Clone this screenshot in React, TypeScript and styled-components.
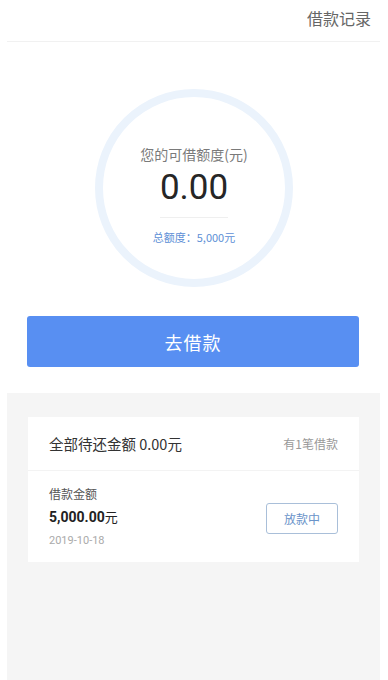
import styled, { createGlobalStyle } from 'styled-components';

const GlobalStyle = createGlobalStyle`
    html, body {
        margin: 0;
        padding: 0;
        background: #ffffff;
        font-family: "Noto Sans CJK SC", "Noto Sans", sans-serif;
    }
`;

const loan = {
    date: '2019-10-18',
    amount: '5,000.00',
    status: '放款中',
};

export default function App() {
    return (
        <>
            <GlobalStyle />
            <Page>
                <TopBar>
                    <TopLink>借款记录</TopLink>
                </TopBar>

                <Hero>
                    <Ring>
                        <RingLabel>您的可借额度(元)</RingLabel>
                        <RingValue>0.00</RingValue>
                        <RingDivider />
                        <RingTotal>总额度：5,000元</RingTotal>
                    </Ring>
                </Hero>

                <ButtonWrap>
                    <PrimaryButton>去借款</PrimaryButton>
                </ButtonWrap>

                <GrayPanel>
                    <Card>
                        <CardHeader>
                            <CardTitle>全部待还金额 0.00元</CardTitle>
                            <CardCount>有1笔借款</CardCount>
                        </CardHeader>
                        <LoanRow>
                            <LoanInfo>
                                <LoanLabel>借款金额</LoanLabel>
                                <LoanAmount>
                                    {loan.amount}
                                    <small>元</small>
                                </LoanAmount>
                                <LoanDate>{loan.date}</LoanDate>
                            </LoanInfo>
                            <StatusButton>{loan.status}</StatusButton>
                        </LoanRow>
                    </Card>
                </GrayPanel>
            </Page>
        </>
    );
}

/* Styles */
const Page = styled.div`
    width: 388px;
    height: 680px;
    display: flex;
    flex-direction: column;
    overflow: hidden;
    background: #fff;
`;
const TopBar = styled.div`
    height: 42px;
    margin: 0 8px 0 7px;
    border-bottom: 1px solid #f1f1f1;
    display: flex;
    justify-content: flex-end;
    align-items: flex-start;
    box-sizing: border-box;
`;
const TopLink = styled.span`
    font-size: 16px;
    line-height: 20px;
    color: #666;
    margin-top: 8px;
    margin-right: 9px;
`;
const Hero = styled.div`
    display: flex;
    justify-content: center;
    padding-top: 47px;
`;
const Ring = styled.div`
    width: 198px;
    height: 198px;
    box-sizing: border-box;
    border: 8px solid #ebf3fc;
    border-radius: 50%;
    display: flex;
    flex-direction: column;
    align-items: center;
    padding-top: 48px;
`;
const RingLabel = styled.div`
    font-size: 14px;
    line-height: 18px;
    color: #7a7a7a;
`;
const RingValue = styled.div`
    font-family: "Roboto", "Noto Sans", sans-serif;
    font-size: 35px;
    line-height: 40px;
    color: #262626;
    margin-top: 5px;
`;
const RingDivider = styled.div`
    width: 68px;
    height: 1px;
    background: #efefef;
    margin-top: 9px;
`;
const RingTotal = styled.div`
    font-size: 11px;
    line-height: 16px;
    color: #5e8fd6;
    margin-top: 11px;
`;
const ButtonWrap = styled.div`
    padding: 29px 29px 0 27px;
`;
const PrimaryButton = styled.button`
    width: 100%;
    height: 51px;
    border: none;
    border-radius: 3px;
    background: #588ff2;
    color: #fff;
    font-family: "Noto Sans CJK SC", sans-serif;
    font-size: 18px;
    letter-spacing: 1px;
`;
const GrayPanel = styled.div`
    flex: 1;
    margin: 26px 8px 0 7px;
    background: #f5f5f5;
    padding: 24px 21px 0 21px;
`;
const Card = styled.div`
    background: #fff;
`;
const CardHeader = styled.div`
    height: 53px;
    padding: 0 21px;
    border-bottom: 1px solid #f3f3f3;
    display: flex;
    align-items: center;
    justify-content: space-between;
`;
const CardTitle = styled.span`
    font-size: 14.5px;
    color: #333;
`;
const CardCount = styled.span`
    font-size: 12px;
    color: #999;
`;
const LoanRow = styled.div`
    padding: 12px 21px 10px 21px;
    display: flex;
    align-items: center;
    justify-content: space-between;
`;
const LoanInfo = styled.div`
    display: flex;
    flex-direction: column;
`;
const LoanLabel = styled.span`
    font-size: 12px;
    line-height: 22px;
    color: #555;
`;
const LoanAmount = styled.span`
    font-family: "Roboto", "Noto Sans CJK SC", sans-serif;
    font-size: 14px;
    font-weight: 700;
    line-height: 24px;
    color: #222;
    small {
        font-family: "Noto Sans CJK SC", sans-serif;
        font-size: 13px;
        font-weight: 400;
    }
`;
const LoanDate = styled.span`
    font-family: "Roboto", sans-serif;
    font-size: 11px;
    line-height: 23px;
    color: #aaa;
`;
const StatusButton = styled.div`
    width: 72px;
    height: 31px;
    box-sizing: border-box;
    border: 1px solid #a9bfd9;
    border-radius: 3px;
    display: flex;
    align-items: center;
    justify-content: center;
    font-size: 12px;
    color: #6a93c9;
    margin-top: 2px;
`;
